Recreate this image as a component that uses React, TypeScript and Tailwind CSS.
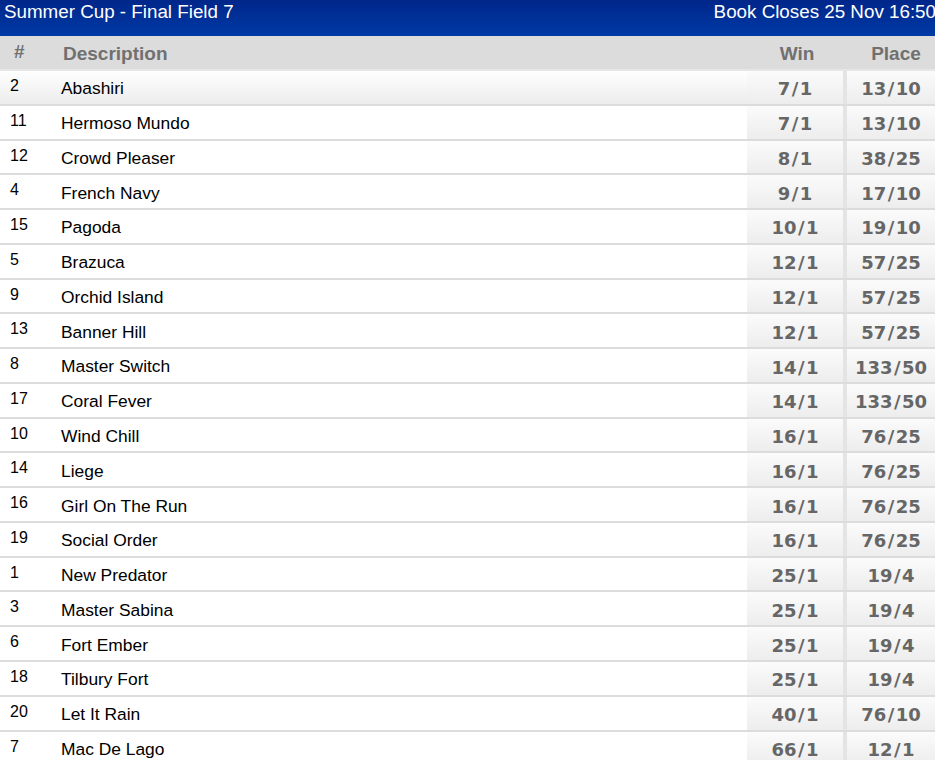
const runners: [string, string, string, string][] = [
  ['2', 'Abashiri', '7/1', '13/10'],
  ['11', 'Hermoso Mundo', '7/1', '13/10'],
  ['12', 'Crowd Pleaser', '8/1', '38/25'],
  ['4', 'French Navy', '9/1', '17/10'],
  ['15', 'Pagoda', '10/1', '19/10'],
  ['5', 'Brazuca', '12/1', '57/25'],
  ['9', 'Orchid Island', '12/1', '57/25'],
  ['13', 'Banner Hill', '12/1', '57/25'],
  ['8', 'Master Switch', '14/1', '133/50'],
  ['17', 'Coral Fever', '14/1', '133/50'],
  ['10', 'Wind Chill', '16/1', '76/25'],
  ['14', 'Liege', '16/1', '76/25'],
  ['16', 'Girl On The Run', '16/1', '76/25'],
  ['19', 'Social Order', '16/1', '76/25'],
  ['1', 'New Predator', '25/1', '19/4'],
  ['3', 'Master Sabina', '25/1', '19/4'],
  ['6', 'Fort Ember', '25/1', '19/4'],
  ['18', 'Tilbury Fort', '25/1', '19/4'],
  ['20', 'Let It Rain', '40/1', '76/10'],
  ['7', 'Mac De Lago', '66/1', '12/1'],
];

// the odds face is wide like Verdana, so pad the slash out a bit
function OddsCell({ value, w }: { value: string; w: string }) {
  const [a, b] = value.split('/');
  return (
    <div
      className={`${w} h-full flex items-center justify-center pt-[4px] bg-gradient-to-b from-[#fbfbfb] to-[#ededed] font-['DejaVu_Sans',sans-serif] font-bold text-[18px] leading-[22px] text-[#666]`}
    >
      {a}
      <span className="px-[1.5px]">/</span>
      {b}
    </div>
  );
}

export default function App() {
  return (
    <div className="w-[935px] h-[760px] overflow-hidden bg-white font-['Liberation_Sans',Arial,sans-serif]">
      {/* title bar */}
      <div className="h-[36px] flex justify-between pl-[4px] pt-[1px] bg-gradient-to-b from-[#00268a] to-[#003aa6] text-white text-[18.8px] leading-[22px] whitespace-nowrap">
        <span>Summer Cup - Final Field 7</span>
        <span className="-mr-[1px]">Book Closes 25 Nov 16:50</span>
      </div>

      {/* column headings */}
      <div className="h-[35px] flex items-center bg-[#dcdcdc] border-b-2 border-[#e6e6e6] text-[#707070] font-bold">
        <div className="w-[61px] pl-[14px] text-[19px] self-start pt-[2px]">#</div>
        <div className="flex-1 pl-[2px] pt-[3px] text-[19px]">Description</div>
        <div className="w-[98px] text-center pt-[3px] text-[19px] pr-[2px]">Win</div>
        <div className="w-[88px] text-center pt-[3px] text-[19px] pl-[10px]">Place</div>
      </div>

      {runners.map(([no, name, win, place], i) => (
        <div
          key={no}
          className={`h-[34.78px] flex border-b-2 border-[#dcdcdc] ${
            i === 0 ? 'bg-gradient-to-b from-white to-[#ececec]' : 'bg-white'
          }`}
        >
          <div className="w-[61px] pl-[10px] pt-[6px] text-[16px] leading-[18px] text-black">{no}</div>
          <div className="flex-1 flex items-center pt-[2px] text-[17.4px] text-black">{name}</div>
          <div className="flex h-full bg-[#e4e4e4] gap-[4px]">
            <OddsCell value={win} w="w-[96px]" />
            <OddsCell value={place} w="w-[88px]" />
          </div>
        </div>
      ))}
    </div>
  );
}
